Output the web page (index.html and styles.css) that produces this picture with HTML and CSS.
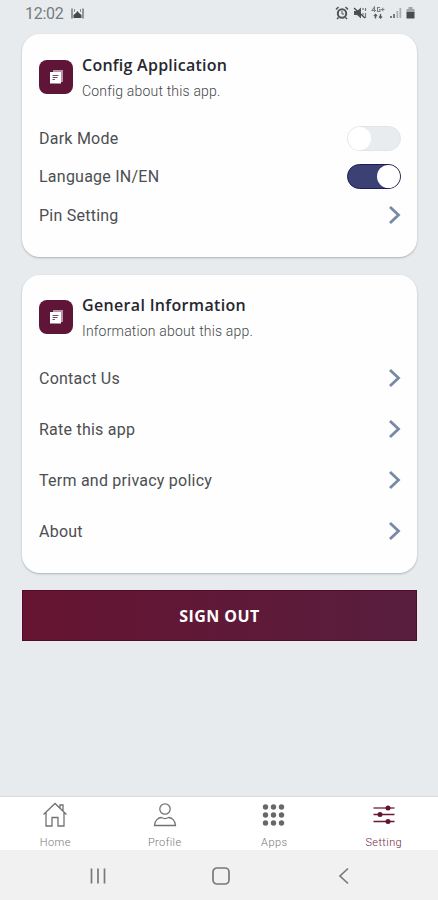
FILE: index.html
```html
<!DOCTYPE html>
<html lang="en">
<head>
<meta charset="utf-8">
<meta name="viewport" content="width=device-width, initial-scale=1">
<title>Setting</title>
<link rel="stylesheet" href="styles.css">
</head>
<body>
<div class="screen">
  <header class="status">
    <span class="clock">12:02</span>
    <svg class="photo" width="13" height="11" viewBox="0 0 13 11"><path d="M1 .5v10M12 .5v10" stroke="#777b7e" stroke-width="1.5"/><path d="M2.500 10V7L5 5l1.500-2L8 5l2.500 2v3z" fill="#44484b"/><path d="M3.500 1v3M9.500 1v3" stroke="#8a8e91"/></svg>
    <div class="status-icons">
      <svg width="14" height="14" viewBox="0 0 14 14" fill="none" stroke="#505356"><circle cx="7" cy="7.500" r="4.200" stroke-width="2"/><path d="M1 3.500 3.500 1M13 3.500 10.500 1M3.500 11.500 2 13M10.500 11.500 12 13" stroke-width="1.500"/><path d="M7 5v3h2"/></svg>
      <svg width="14" height="14" viewBox="0 0 14 14"><path d="M1 5h3l4-3.500v11L4 9H1z" fill="#505356"/><path d="m1 2 11 10" stroke="#45484b" stroke-width="1.300"/><path d="M10 2v2M10 7v2M12.500 2v3M12.500 7v5" stroke="#777a7d" stroke-width="1.200"/></svg>
      <svg width="14" height="14" viewBox="0 0 14 14" fill="none" stroke="#7c8083" stroke-width="1.100"><path d="M3.500 6V1L1 4.500h4M9 1.500H6.500v4H9V3.500H8M10 3.500h3.500M11.750 1.750v3.500"/><path d="M4.500 12.500V8.500M3 10l1.500-1.500L6 10M9.500 8v4M8 10.500 9.500 12l1.500-1.500" stroke="#595d60" stroke-width="1.400"/></svg>
      <svg width="13" height="14" viewBox="0 0 13 14"><path d="M1 10h2v2H1zM4 8h2v4H4z" fill="#777b7e"/><path d="M7.500 5h1.700v7H7.500zM10.500 2h1.700v10h-1.700z" fill="#a9adb0"/></svg>
      <svg width="9" height="14" viewBox="0 0 9 14"><path d="M2.500 1h4v2h-4zM.5 3h8v4h-8z" fill="#a2a6a9"/><path d="M.5 6h8v6.500h-8z" fill="#484c4f"/></svg>
    </div>
  </header>
  <main class="content">
    <section class="card config">
      <div class="card-head">
        <span class="badge"><svg width="15" height="16" viewBox="0 0 15 16"><path d="M4 1h10v12h-2V3H4z" fill="#b797a6"/><path d="M1 3h11v11.500H1z" fill="#fff"/><path d="M3.500 6.500h6M3.500 8.500h5M3.500 10.500h2.500" stroke="#7c4560"/></svg></span>
        <div><h2 class="title-config">Config Application</h2><p class="sub-config">Config about this app.</p></div>
      </div>
      <div class="row"><span>Dark Mode</span><span class="toggle"></span></div>
      <div class="row"><span>Language IN/EN</span><span class="toggle on"></span></div>
      <div class="row"><span>Pin Setting</span><svg class="chevron" viewBox="0 0 13 20"><path d="m2 2 8.500 8L2 18"/></svg></div>
    </section>
    <section class="card general">
      <div class="card-head">
        <span class="badge"><svg width="15" height="16" viewBox="0 0 15 16"><path d="M4 1h10v12h-2V3H4z" fill="#b797a6"/><path d="M1 3h11v11.500H1z" fill="#fff"/><path d="M3.500 6.500h6M3.500 8.500h5M3.500 10.500h2.500" stroke="#7c4560"/></svg></span>
        <div><h2 class="title-general">General Information</h2><p class="sub-general">Information about this app.</p></div>
      </div>
      <div class="row"><span>Contact Us</span><svg class="chevron" viewBox="0 0 13 20"><path d="m2 2 8.500 8L2 18"/></svg></div>
      <div class="row"><span>Rate this app</span><svg class="chevron" viewBox="0 0 13 20"><path d="m2 2 8.500 8L2 18"/></svg></div>
      <div class="row"><span>Term and privacy policy</span><svg class="chevron" viewBox="0 0 13 20"><path d="m2 2 8.500 8L2 18"/></svg></div>
      <div class="row"><span>About</span><svg class="chevron" viewBox="0 0 13 20"><path d="m2 2 8.500 8L2 18"/></svg></div>
    </section>
    <button class="sign-out">SIGN OUT</button>
  </main>
  <nav class="tabs">
    <div class="tab"><svg width="26" height="26" viewBox="0 0 26 26"><path d="M1.500 12.500 13 1.500l11.500 11M4 10.500V24h6v-8.500h6V24h6V10.500M18 6V3h3v6"/></svg><span>Home</span></div>
    <div class="tab"><svg width="26" height="26" viewBox="0 0 26 26"><circle cx="13" cy="7" r="5.200"/><path d="M2.500 23.500c0-5 4-8 7-8 2.500 1.500 4.500 1.500 7 0 3 0 7 3 7 8z"/></svg><span>Profile</span></div>
    <div class="tab"><svg class="dots" width="26" height="26" viewBox="0 0 26 26"><circle cx="4.500" cy="5" r="2.700"/><circle cx="12.500" cy="5" r="2.700"/><circle cx="20.500" cy="5" r="2.700"/><circle cx="4.500" cy="13" r="2.700"/><circle cx="12.500" cy="13" r="2.700"/><circle cx="20.500" cy="13" r="2.700"/><circle cx="4.500" cy="21" r="2.700"/><circle cx="12.500" cy="21" r="2.700"/><circle cx="20.500" cy="21" r="2.700"/></svg><span>Apps</span></div>
    <div class="tab active"><svg width="26" height="26" viewBox="0 0 26 26"><path d="M2.500 6h21" stroke="#935267"/><path d="M2.500 12.500h21M2.500 19.500h21"/><g fill="#641433" stroke="none"><circle cx="17" cy="6" r="2.500"/><circle cx="9" cy="12.500" r="2.500"/><circle cx="17" cy="19.500" r="2.500"/></g></svg><span>Setting</span></div>
  </nav>
  <footer class="system">
    <svg width="20" height="20" viewBox="0 0 20 20"><path d="M3.500 2.500v15M10 2.500v15M16.500 2.500v15"/></svg>
    <svg width="20" height="20" viewBox="0 0 20 20"><rect x="2" y="2" width="16" height="16" rx="4"/></svg>
    <svg width="20" height="20" viewBox="0 0 20 20"><path d="M14 2.500 6 10l8 7.500"/></svg>
  </footer>
</div>
</body>
</html>
```
FILE: styles.css
```css
* { box-sizing: border-box; }
body { margin: 0; font-family: Roboto, sans-serif; }
.screen { width: 438px; height: 900px; display: flex; flex-direction: column; background: #e7ebee; }
.status { height: 34px; display: flex; align-items: flex-start; padding: 4px 23px 0 25px; }
.clock { font-size: 16px; line-height: 20px; color: #777b7e; letter-spacing: -.3px; width: 39px; }
.photo { margin: 4px 0 0 7px; }
.status-icons { display: flex; gap: 4px; margin-left: auto; padding-top: 2px; }
.content { flex: 1; padding: 0 21px 0 22px; display: flex; flex-direction: column; }
.card { background: #fefefe; border-radius: 18px; padding: 17px 16px 0 17px; box-shadow: 0 1px 2px rgba(80, 88, 94, .38); }
.config { height: 223px; margin-bottom: 18px; }
.general { height: 298px; margin-bottom: 17px; }
.card-head { display: flex; gap: 9px; height: 68px; }
.badge { width: 34px; height: 34px; margin-top: 9px; border-radius: 8px; background: #5f1538; display: flex; align-items: center; justify-content: center; }
h2 { margin: 3px 0 0; font: 600 16px/22px "Open Sans", sans-serif; color: #27272f; }
.card p { margin: 5px 0 0; font-size: 14px; line-height: 20px; font-weight: 300; color: #44474b; }
.title-config { letter-spacing: .25px; }
.title-general { letter-spacing: .33px; }
.sub-config, .sub-general { letter-spacing: .18px; }
.row { height: 38.5px; display: flex; align-items: center; justify-content: space-between; font-size: 16px; letter-spacing: .24px; color: #4c4e51; }
.general { padding-top: 16px; }
.general .card-head { height: 61px; }
.general .row { height: 51px; }
.general .row span { padding-top: 1px; }
.toggle { width: 54px; height: 25px; border-radius: 13px; background: #e9ecee; border: 1px solid #e2e5e7; display: flex; align-items: center; }
.toggle::before { content: ""; width: 23px; height: 23px; border-radius: 50%; background: #fff; }
.toggle.on { background: #3b4273; border-color: #1b1c58; justify-content: flex-end; }
.chevron { width: 13px; height: 20px; fill: none; stroke: #7889a5; stroke-width: 2.8; }
.sign-out { height: 51px; flex: none; border: 1px solid #520b2b; background: linear-gradient(90deg, #661431, #591e3e); color: #fff; font: 700 16px "Open Sans", sans-serif; letter-spacing: .45px; padding: 0; }
.tabs { height: 54px; background: #fff; border-top: 1px solid #d8dcde; display: grid; grid-template-columns: repeat(4, 1fr); }
.tab { display: flex; flex-direction: column; align-items: center; padding: 5px 0 0 1px; color: #76787a; font-size: 11px; line-height: 13px; font-weight: 300; }
.tab span { margin-top: 8px; letter-spacing: .4px; }
.tab svg { fill: none; stroke: #707274; stroke-width: 1.3; }
.tab .dots { fill: #66686a; stroke: none; }
.tab.active { color: #6d2640; }
.tab.active svg { stroke: #6b1737; stroke-width: 1.7; }
.system { height: 50px; background: #f1f1f1; display: flex; justify-content: space-between; align-items: center; padding: 2px 84px 0 88px; }
.system svg { fill: none; stroke: #77797a; stroke-width: 1.7; }
```
